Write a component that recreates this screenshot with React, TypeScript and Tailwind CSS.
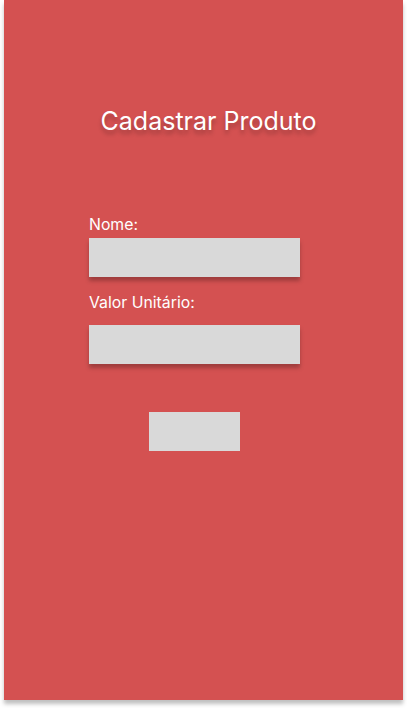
export default function App() {
  return (
    <div className="w-[407px] h-[708px] bg-white" style={{ fontFamily: 'Inter, "Noto Sans", sans-serif' }}>
      <div className="ml-[4px] w-[399px] h-[700px] bg-[#d45151] shadow-[0_4px_4px_rgba(0,0,0,0.25)] flex flex-col">
        <h1 className="mt-[106px] pl-[10px] text-center text-[25px] leading-[30px] text-white [text-shadow:0_4px_4px_rgba(0,0,0,0.25)]">
          Cadastrar Produto
        </h1>
        <form className="mt-[79px] ml-[85px] flex flex-col">
          <label className="text-[15.8px] leading-[19px] text-white">Nome:</label>
          <input className="mt-[4px] w-[211px] h-[39px] bg-[#d9d9d9] shadow-[0_4px_4px_rgba(0,0,0,0.25)] outline-none" />
          <label className="mt-[16px] text-[15.8px] leading-[19px] text-white">Valor Unitário:</label>
          <input className="mt-[13px] w-[211px] h-[39px] bg-[#d9d9d9] shadow-[0_4px_4px_rgba(0,0,0,0.25)] outline-none" />
          <button type="button" className="mt-[48px] ml-[60px] w-[91px] h-[39px] bg-[#d9d9d9]" />
        </form>
      </div>
    </div>
  )
}
